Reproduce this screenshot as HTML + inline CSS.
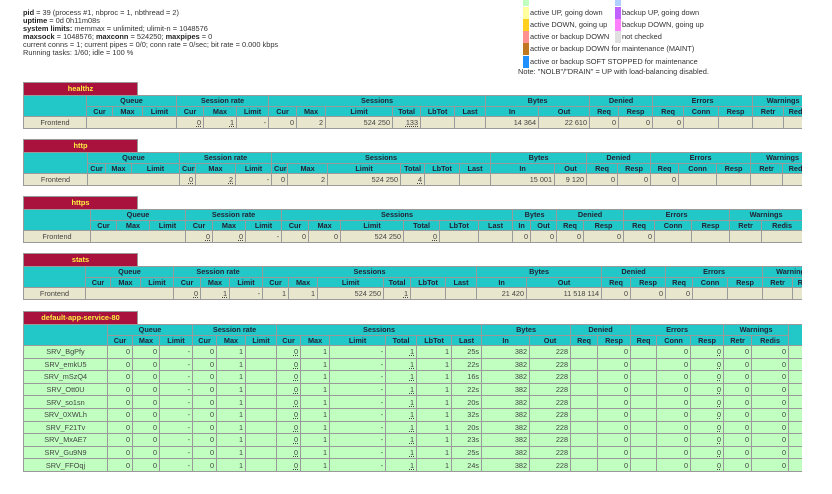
<!DOCTYPE html>
<html><head><meta charset="utf-8"><style>
body{margin:0;width:832px;height:494px;overflow:hidden;background:#fff;font-family:"Liberation Sans",Arial,sans-serif;color:#333;position:relative}
.info{position:absolute;left:23px;top:9px;font-size:7.4px;line-height:7.9px;color:#333}
.info b{color:#222}
.lg{position:absolute;font-size:7.4px;line-height:12.3px;color:#333;white-space:nowrap}
.sw{position:absolute;width:6px;height:12px}
.wrap{position:absolute;left:0;width:802px;overflow:hidden;height:200px}
.tab{position:absolute;left:23px;top:0;width:113px;height:12px;background:#a8123c;color:#ffef40;font-weight:bold;font-size:7.4px;text-align:center;line-height:12px;border:1px solid #999;border-bottom:none}
table{position:absolute;left:23px;top:13px;border-collapse:collapse;table-layout:fixed;font-size:7.3px}
td,th{border:1px solid #9a9a9a;padding:0 2px;white-space:nowrap;overflow:hidden}
th{background:#22c8c8;color:#223;font-weight:bold;height:10px;line-height:10px;text-align:center}
tr.h2 th{height:9px;line-height:9px}
td{text-align:right;height:11px;line-height:11px;color:#444}
tr.f td{background:#e8e6cc}
tr.s td{background:#c0ffc0;height:11.6px}
td.n{text-align:center}
u{text-decoration:underline dotted}
</style></head><body>
<div class="info"><b>pid</b> = 39 (process #1, nbproc = 1, nbthread = 2)<br><b>uptime</b> = 0d 0h11m08s<br><b>system limits:</b> memmax = unlimited; ulimit-n = 1048576<br><b>maxsock</b> = 1048576; <b>maxconn</b> = 524250; <b>maxpipes</b> = 0<br>current conns = 1; current pipes = 0/0; conn rate = 0/sec; bit rate = 0.000 kbps<br>Running tasks: 1/60; idle = 100 %</div>

<div class="sw" style="left:523px;top:-6px;background:#c0ffc0"></div><div class="sw" style="left:615px;top:-6px;background:#b0d0ff"></div>
<div class="sw" style="left:523px;top:7px;background:#ffffa0"></div><div class="lg" style="left:530px;top:7px">active UP, going down</div>
<div class="sw" style="left:615px;top:7px;background:#c060ff"></div><div class="lg" style="left:622px;top:7px">backup UP, going down</div>
<div class="sw" style="left:523px;top:19px;background:#ffd020"></div><div class="lg" style="left:530px;top:19px">active DOWN, going up</div>
<div class="sw" style="left:615px;top:19px;background:#ff80ff"></div><div class="lg" style="left:622px;top:19px">backup DOWN, going up</div>
<div class="sw" style="left:523px;top:31px;background:#ff9090"></div><div class="lg" style="left:530px;top:31px">active or backup DOWN</div>
<div class="sw" style="left:615px;top:31px;background:#e0e0e0"></div><div class="lg" style="left:622px;top:31px">not checked</div>
<div class="sw" style="left:523px;top:43px;background:#c07820"></div><div class="lg" style="left:530px;top:43px">active or backup DOWN for maintenance (MAINT)</div>
<div class="sw" style="left:523px;top:56px;background:#2090ff"></div><div class="lg" style="left:530px;top:56px">active or backup SOFT STOPPED for maintenance</div>
<div class="lg" style="left:518px;top:66px">Note: "NOLB"/"DRAIN" = UP with load-balancing disabled.</div>

<!-- healthz -->
<div class="wrap" style="top:82px"><div class="tab">healthz</div>
<table style="width:820px"><colgroup><col style="width:63px"><col style="width:26px"><col style="width:30px"><col style="width:34px"><col style="width:27px"><col style="width:33px"><col style="width:32px"><col style="width:28px"><col style="width:29px"><col style="width:67px"><col style="width:28px"><col style="width:34px"><col style="width:31px"><col style="width:53px"><col style="width:51px"><col style="width:29px"><col style="width:34px"><col style="width:31px"><col style="width:35px"><col style="width:34px"><col style="width:31px"><col style="width:30px"><col style="width:30px"></colgroup>
<tr><th rowspan="2"></th><th colspan="3">Queue</th><th colspan="3">Session rate</th><th colspan="6">Sessions</th><th colspan="2">Bytes</th><th colspan="2">Denied</th><th colspan="3">Errors</th><th colspan="2">Warnings</th><th rowspan="2"></th></tr>
<tr class="h2"><th>Cur</th><th>Max</th><th>Limit</th><th>Cur</th><th>Max</th><th>Limit</th><th>Cur</th><th>Max</th><th>Limit</th><th>Total</th><th>LbTot</th><th>Last</th><th>In</th><th>Out</th><th>Req</th><th>Resp</th><th>Req</th><th>Conn</th><th>Resp</th><th>Retr</th><th>Redis</th></tr>
<tr class="f"><td class="n">Frontend</td><td colspan="3"></td><td><u>0</u></td><td><u>1</u></td><td>-</td><td>0</td><td>2</td><td>524 250</td><td><u>133</u></td><td></td><td></td><td>14 364</td><td>22 610</td><td>0</td><td>0</td><td>0</td><td></td><td></td><td></td><td></td><td></td></tr>
</table></div>

<!-- http -->
<div class="wrap" style="top:139px"><div class="tab">http</div>
<table style="width:820px"><colgroup><col style="width:64px"><col style="width:18px"><col style="width:26px"><col style="width:48px"><col style="width:16px"><col style="width:40px"><col style="width:36px"><col style="width:16px"><col style="width:40px"><col style="width:73px"><col style="width:24px"><col style="width:35px"><col style="width:31px"><col style="width:64px"><col style="width:32px"><col style="width:31px"><col style="width:33px"><col style="width:28px"><col style="width:38px"><col style="width:34px"><col style="width:32px"><col style="width:32px"><col style="width:30px"></colgroup>
<tr><th rowspan="2"></th><th colspan="3">Queue</th><th colspan="3">Session rate</th><th colspan="6">Sessions</th><th colspan="2">Bytes</th><th colspan="2">Denied</th><th colspan="3">Errors</th><th colspan="2">Warnings</th><th rowspan="2"></th></tr>
<tr class="h2"><th>Cur</th><th>Max</th><th>Limit</th><th>Cur</th><th>Max</th><th>Limit</th><th>Cur</th><th>Max</th><th>Limit</th><th>Total</th><th>LbTot</th><th>Last</th><th>In</th><th>Out</th><th>Req</th><th>Resp</th><th>Req</th><th>Conn</th><th>Resp</th><th>Retr</th><th>Redis</th></tr>
<tr class="f"><td class="n">Frontend</td><td colspan="3"></td><td><u>0</u></td><td><u>2</u></td><td>-</td><td>0</td><td>2</td><td>524 250</td><td><u>4</u></td><td></td><td></td><td>15 001</td><td>9 120</td><td>0</td><td>0</td><td>0</td><td></td><td></td><td></td><td></td><td></td></tr>
</table></div>

<!-- https -->
<div class="wrap" style="top:196px"><div class="tab">https</div>
<table style="width:809px"><colgroup><col style="width:67px"><col style="width:26px"><col style="width:33px"><col style="width:36px"><col style="width:27px"><col style="width:33px"><col style="width:36px"><col style="width:27px"><col style="width:32px"><col style="width:63px"><col style="width:36px"><col style="width:39px"><col style="width:34px"><col style="width:18px"><col style="width:26px"><col style="width:27px"><col style="width:40px"><col style="width:31px"><col style="width:37px"><col style="width:38px"><col style="width:32px"><col style="width:41px"><col style="width:30px"></colgroup>
<tr><th rowspan="2"></th><th colspan="3">Queue</th><th colspan="3">Session rate</th><th colspan="6">Sessions</th><th colspan="2">Bytes</th><th colspan="2">Denied</th><th colspan="3">Errors</th><th colspan="2">Warnings</th><th rowspan="2"></th></tr>
<tr class="h2"><th>Cur</th><th>Max</th><th>Limit</th><th>Cur</th><th>Max</th><th>Limit</th><th>Cur</th><th>Max</th><th>Limit</th><th>Total</th><th>LbTot</th><th>Last</th><th>In</th><th>Out</th><th>Req</th><th>Resp</th><th>Req</th><th>Conn</th><th>Resp</th><th>Retr</th><th>Redis</th></tr>
<tr class="f"><td class="n">Frontend</td><td colspan="3"></td><td><u>0</u></td><td><u>0</u></td><td>-</td><td>0</td><td>0</td><td>524 250</td><td><u>0</u></td><td></td><td></td><td>0</td><td>0</td><td>0</td><td>0</td><td>0</td><td></td><td></td><td></td><td></td><td></td></tr>
</table></div>

<!-- stats -->
<div class="wrap" style="top:253px"><div class="tab">stats</div>
<table style="width:829px"><colgroup><col style="width:62px"><col style="width:25px"><col style="width:30px"><col style="width:33px"><col style="width:27px"><col style="width:29px"><col style="width:33px"><col style="width:26px"><col style="width:29px"><col style="width:66px"><col style="width:27px"><col style="width:35px"><col style="width:31px"><col style="width:50px"><col style="width:75px"><col style="width:29px"><col style="width:35px"><col style="width:27px"><col style="width:35px"><col style="width:35px"><col style="width:30px"><col style="width:30px"><col style="width:30px"></colgroup>
<tr><th rowspan="2"></th><th colspan="3">Queue</th><th colspan="3">Session rate</th><th colspan="6">Sessions</th><th colspan="2">Bytes</th><th colspan="2">Denied</th><th colspan="3">Errors</th><th colspan="2">Warnings</th><th rowspan="2"></th></tr>
<tr class="h2"><th>Cur</th><th>Max</th><th>Limit</th><th>Cur</th><th>Max</th><th>Limit</th><th>Cur</th><th>Max</th><th>Limit</th><th>Total</th><th>LbTot</th><th>Last</th><th>In</th><th>Out</th><th>Req</th><th>Resp</th><th>Req</th><th>Conn</th><th>Resp</th><th>Retr</th><th>Redis</th></tr>
<tr class="f"><td class="n">Frontend</td><td colspan="3"></td><td><u>0</u></td><td><u>1</u></td><td>-</td><td>1</td><td>1</td><td>524 250</td><td><u>1</u></td><td></td><td></td><td>21 420</td><td>11 518 114</td><td>0</td><td>0</td><td>0</td><td></td><td></td><td></td><td></td><td></td></tr>
</table></div>

<!-- default-app-service-80 -->
<div class="wrap" style="top:311px;height:170px"><div class="tab">default-app-service-80</div>
<table style="width:779px"><colgroup><col style="width:84px"><col style="width:25px"><col style="width:27px"><col style="width:33px"><col style="width:24px"><col style="width:29px"><col style="width:31px"><col style="width:24px"><col style="width:29px"><col style="width:56px"><col style="width:31px"><col style="width:35px"><col style="width:30px"><col style="width:48px"><col style="width:41px"><col style="width:27px"><col style="width:33px"><col style="width:26px"><col style="width:34px"><col style="width:33px"><col style="width:28px"><col style="width:37px"><col style="width:14px"></colgroup>
<tr><th rowspan="2"></th><th colspan="3">Queue</th><th colspan="3">Session rate</th><th colspan="6">Sessions</th><th colspan="2">Bytes</th><th colspan="2">Denied</th><th colspan="3">Errors</th><th colspan="2">Warnings</th><th rowspan="2"></th></tr>
<tr class="h2"><th>Cur</th><th>Max</th><th>Limit</th><th>Cur</th><th>Max</th><th>Limit</th><th>Cur</th><th>Max</th><th>Limit</th><th>Total</th><th>LbTot</th><th>Last</th><th>In</th><th>Out</th><th>Req</th><th>Resp</th><th>Req</th><th>Conn</th><th>Resp</th><th>Retr</th><th>Redis</th></tr>
<tr class="s"><td class="n">SRV_BgPfy</td><td>0</td><td>0</td><td>-</td><td>0</td><td>1</td><td></td><td><u>0</u></td><td>1</td><td>-</td><td><u>1</u></td><td>1</td><td>25s</td><td>382</td><td>228</td><td></td><td>0</td><td></td><td>0</td><td><u>0</u></td><td>0</td><td>0</td><td></td></tr>
<tr class="s"><td class="n">SRV_emkU5</td><td>0</td><td>0</td><td>-</td><td>0</td><td>1</td><td></td><td><u>0</u></td><td>1</td><td>-</td><td><u>1</u></td><td>1</td><td>22s</td><td>382</td><td>228</td><td></td><td>0</td><td></td><td>0</td><td><u>0</u></td><td>0</td><td>0</td><td></td></tr>
<tr class="s"><td class="n">SRV_mSzQ4</td><td>0</td><td>0</td><td>-</td><td>0</td><td>1</td><td></td><td><u>0</u></td><td>1</td><td>-</td><td><u>1</u></td><td>1</td><td>16s</td><td>382</td><td>228</td><td></td><td>0</td><td></td><td>0</td><td><u>0</u></td><td>0</td><td>0</td><td></td></tr>
<tr class="s"><td class="n">SRV_Ott0U</td><td>0</td><td>0</td><td>-</td><td>0</td><td>1</td><td></td><td><u>0</u></td><td>1</td><td>-</td><td><u>1</u></td><td>1</td><td>22s</td><td>382</td><td>228</td><td></td><td>0</td><td></td><td>0</td><td><u>0</u></td><td>0</td><td>0</td><td></td></tr>
<tr class="s"><td class="n">SRV_so1sn</td><td>0</td><td>0</td><td>-</td><td>0</td><td>1</td><td></td><td><u>0</u></td><td>1</td><td>-</td><td><u>1</u></td><td>1</td><td>20s</td><td>382</td><td>228</td><td></td><td>0</td><td></td><td>0</td><td><u>0</u></td><td>0</td><td>0</td><td></td></tr>
<tr class="s"><td class="n">SRV_0XWLh</td><td>0</td><td>0</td><td>-</td><td>0</td><td>1</td><td></td><td><u>0</u></td><td>1</td><td>-</td><td><u>1</u></td><td>1</td><td>32s</td><td>382</td><td>228</td><td></td><td>0</td><td></td><td>0</td><td><u>0</u></td><td>0</td><td>0</td><td></td></tr>
<tr class="s"><td class="n">SRV_F21Tv</td><td>0</td><td>0</td><td>-</td><td>0</td><td>1</td><td></td><td><u>0</u></td><td>1</td><td>-</td><td><u>1</u></td><td>1</td><td>20s</td><td>382</td><td>228</td><td></td><td>0</td><td></td><td>0</td><td><u>0</u></td><td>0</td><td>0</td><td></td></tr>
<tr class="s"><td class="n">SRV_MxAE7</td><td>0</td><td>0</td><td>-</td><td>0</td><td>1</td><td></td><td><u>0</u></td><td>1</td><td>-</td><td><u>1</u></td><td>1</td><td>23s</td><td>382</td><td>228</td><td></td><td>0</td><td></td><td>0</td><td><u>0</u></td><td>0</td><td>0</td><td></td></tr>
<tr class="s"><td class="n">SRV_Gu9N9</td><td>0</td><td>0</td><td>-</td><td>0</td><td>1</td><td></td><td><u>0</u></td><td>1</td><td>-</td><td><u>1</u></td><td>1</td><td>25s</td><td>382</td><td>228</td><td></td><td>0</td><td></td><td>0</td><td><u>0</u></td><td>0</td><td>0</td><td></td></tr>
<tr class="s"><td class="n">SRV_FFOqj</td><td>0</td><td>0</td><td>-</td><td>0</td><td>1</td><td></td><td><u>0</u></td><td>1</td><td>-</td><td><u>1</u></td><td>1</td><td>24s</td><td>382</td><td>228</td><td></td><td>0</td><td></td><td>0</td><td><u>0</u></td><td>0</td><td>0</td><td></td></tr>
</table></div>
</body></html>
